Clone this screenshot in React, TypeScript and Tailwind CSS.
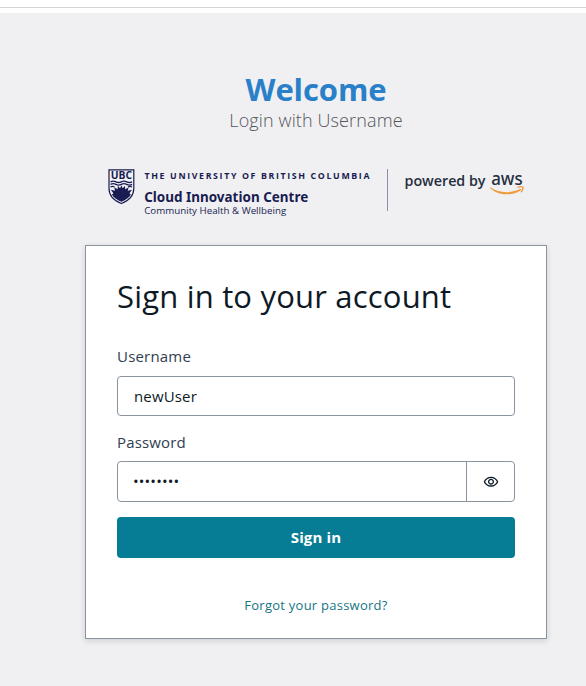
import React from 'react';

function Crest() {
  return (
    <svg width="27" height="42" viewBox="0 -6 27 42" className="-mt-[6px] block shrink-0">
      <path d="M1 .9h24.8v18.300c0 7.400-4.600 12.300-12.400 15.300C5.600 31.500 1 26.600 1 19.200z" fill="#f2f2f6" stroke="#181c50" strokeWidth="1.200" />
      <text x="2.700" y="10.300" textLength="21.400" lengthAdjust="spacingAndGlyphs" fill="#181c50" fontFamily="'Open Sans', sans-serif" fontSize="11" fontWeight="700">UBC</text>
      <g fill="none" stroke="#181c50" strokeWidth="1.300">
        <path d="M2.500 12.800q2.700-1.400 5.400 0t5.400 0 5.400 0 5.400 0" />
        <path d="M2.500 15.400q2.700-1.400 5.400 0t5.400 0 5.400 0 5.400 0" />
        <path d="M2.500 18q2-1.200 4 0M20 18q2-1.200 4 0" />
      </g>
      <path d="M13.400 16.300l1.300 3 2.300-2.500.2 3.500 3.500-2-1 3.500 4.300-1-2.300 3.200q-.6 1 1.200 1.400c-1.800 3-4.800 5.400-9.500 7.400-4.700-2-7.700-4.400-9.500-7.400q1.800-.4 1.200-1.400L2.800 20.800l4.300 1-1-3.500 3.500 2 .2-3.500 2.300 2.500z" fill="#181c50" />
    </svg>
  );
}

function AwsMark() {
  return (
    <svg width="40" height="34" viewBox="0 -5 40 34" className="-mt-[5px] block shrink-0">
      <text x="2.200" y="16" textLength="31.500" lengthAdjust="spacingAndGlyphs" fill="#252f3e" fontFamily="'Noto Sans', sans-serif" fontSize="18" fontWeight="500">aws</text>
      <path d="M1.200 18.300C10 24.200 21.500 24.600 31 20.100c.9-.4 1.500.5.700 1.100C23 27.200 9 26.800 1 18.900c-.4-.4-.2-.9.200-.6z" fill="#ee9b3b" />
      <path d="M28.600 18.600c2-1.100 4.800-1.200 5.200-.6.500.7-.1 3.600-1.800 5.200" fill="none" stroke="#ee9b3b" strokeWidth="1.400" />
    </svg>
  );
}

function Branding() {
  return (
    <div className="mt-[36px] ml-[22px] flex h-[50px] items-start pt-px pl-px">
      <Crest />
      <svg width="228" height="50" viewBox="0 0 228 50" className="ml-[9px] block shrink-0" fill="#181c50">
        <text x=".5" y="9.700" textLength="225" fontFamily="'Open Sans', sans-serif" fontSize="8.800" fontWeight="700">THE UNIVERSITY OF BRITISH COLUMBIA</text>
        <text x=".2" y="32.500" textLength="164" lengthAdjust="spacingAndGlyphs" fontFamily="'Noto Sans', sans-serif" fontSize="14.500" fontWeight="700">Cloud Innovation Centre</text>
        <text x=".2" y="45" textLength="142" lengthAdjust="spacingAndGlyphs" fontFamily="'Open Sans', sans-serif" fontSize="9.800" fontWeight="400">Community Health &amp; Wellbeing</text>
      </svg>
      <div className="ml-[15px] h-[42px] w-px bg-[#8b90a6]" />
      <svg width="86" height="34" viewBox="0 -5 86 34" className="-mt-[5px] ml-[16px] block shrink-0">
        <text x=".5" y="16.500" textLength="81" lengthAdjust="spacingAndGlyphs" fill="#252f3e" fontFamily="'Open Sans', sans-serif" fontSize="14.500" fontWeight="600">powered by</text>
      </svg>
      <div className="-ml-px"><AwsMark /></div>
    </div>
  );
}

function EyeIcon() {
  return (
    <svg width="16" height="16" viewBox="0 0 24 24" fill="#0d1a26">
      <path d="M12 6c3.790 0 7.170 2.130 8.820 5.500C19.170 14.870 15.790 17 12 17s-7.170-2.130-8.820-5.500C4.830 8.130 8.210 6 12 6m0-2C7 4 2.730 7.110 1 11.500 2.730 15.890 7 19 12 19s9.270-3.110 11-7.500C21.270 7.110 17 4 12 4zm0 5c1.380 0 2.500 1.120 2.500 2.500S13.380 14 12 14s-2.500-1.120-2.500-2.500S10.620 9 12 9m0-2c-2.480 0-4.500 2.020-4.500 4.500S9.520 16 12 16s4.500-2.020 4.500-4.500S14.480 7 12 7z" />
    </svg>
  );
}

export default function App() {
  return (
    <div className="min-h-screen bg-[#f0f0f3] font-['Open_Sans',sans-serif]">
      <div className="h-[13px] bg-white pt-[7px]">
        <div className="h-px bg-[#d3d3d3]" />
      </div>
      <main className="ml-[85px] w-[462px] pt-[56px]">
        <header className="text-center">
          <h1 className="text-[31px] leading-[41px] font-bold tracking-[-0.1px] text-[#2a80c8]">Welcome</h1>
          <p className="-mt-[2px] text-[18px] leading-[24px] font-light tracking-[0.12px] text-[#55555a]">Login with Username</p>
        </header>
        <Branding />
        <form
          onSubmit={(e) => e.preventDefault()}
          className="mt-[27px] h-[394px] border border-[#89949f] bg-white px-[31px] pt-[30px] shadow-[0_2px_6px_rgba(13,26,38,0.15)]"
        >
          <h2 className="text-[31px] leading-[40px] tracking-[0.19px] text-[#0d1a26]">Sign in to your account</h2>
          <label htmlFor="username" className="mt-[28px] block text-[15px] leading-[24px] tracking-[0.2px] text-[#304050]">Username</label>
          <input
            id="username"
            defaultValue="newUser"
            className="mt-[8px] block h-[40px] w-full rounded-[4px] border border-[#89949f] px-[16px] text-[15px] tracking-[0.15px] text-[#0d1a26] outline-none"
          />
          <label htmlFor="password" className="mt-[14px] block text-[15px] leading-[24px] tracking-[0.15px] text-[#304050]">Password</label>
          <div className="mt-[7px] flex h-[41px] rounded-[4px] border border-[#89949f]">
            <input
              id="password"
              type="password"
              defaultValue="newuser1"
              className="min-w-0 flex-1 px-[15px] text-[15px] tracking-[0.15px] text-[#0d1a26] outline-none"
            />
            <button type="button" aria-label="Show password" className="flex w-[48px] items-center justify-center border-l border-[#89949f]">
              <EyeIcon />
            </button>
          </div>
          <button type="submit" className="mt-[15px] block h-[41px] w-full rounded-[4px] bg-[#067d95] text-[15px] font-bold tracking-[0.15px] text-white">
            Sign in
          </button>
          <button type="button" className="mt-[37px] block w-full text-center text-[13px] leading-[20px] tracking-[0.25px] text-[#167684]">
            Forgot your password?
          </button>
        </form>
      </main>
    </div>
  );
}
